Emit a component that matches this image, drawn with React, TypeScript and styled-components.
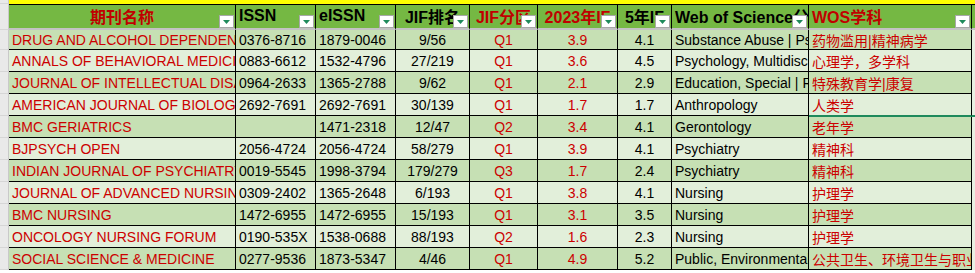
import styled, { createGlobalStyle } from "styled-components"

const GlobalStyle = createGlobalStyle`
  body {
    margin: 0;
    background: #fff;
    font-family: "Liberation Sans", "Noto Sans CJK SC", sans-serif;
  }
`

type Align = "left" | "center"

interface Column {
  title: string
  align: Align
  red?: boolean
  dataAlign: Align
  dataRed?: boolean
}

const columns: Column[] = [
  { title: "期刊名称", align: "center", red: true, dataAlign: "left", dataRed: true },
  { title: "ISSN", align: "left", dataAlign: "left" },
  { title: "eISSN", align: "left", dataAlign: "left" },
  { title: "JIF排名", align: "center", dataAlign: "center" },
  { title: "JIF分区", align: "center", red: true, dataAlign: "center", dataRed: true },
  { title: "2023年IF", align: "center", red: true, dataAlign: "center", dataRed: true },
  { title: "5年IF", align: "center", dataAlign: "center" },
  { title: "Web of Science分类", align: "left", dataAlign: "left" },
  { title: "WOS学科", align: "left", red: true, dataAlign: "left", dataRed: true },
]

const rows: string[][] = [
  ["DRUG AND ALCOHOL DEPENDENCE", "0376-8716", "1879-0046", "9/56", "Q1", "3.9", "4.1", "Substance Abuse | Psychiatry", "药物滥用|精神病学"],
  ["ANNALS OF BEHAVIORAL MEDICINE", "0883-6612", "1532-4796", "27/219", "Q1", "3.6", "4.5", "Psychology, Multidisciplinary", "心理学，多学科"],
  ["JOURNAL OF INTELLECTUAL DISABILITY RESEARCH", "0964-2633", "1365-2788", "9/62", "Q1", "2.1", "2.9", "Education, Special | Rehabilitation", "特殊教育学|康复"],
  ["AMERICAN JOURNAL OF BIOLOGICAL ANTHROPOLOGY", "2692-7691", "2692-7691", "30/139", "Q1", "1.7", "1.7", "Anthropology", "人类学"],
  ["BMC GERIATRICS", "", "1471-2318", "12/47", "Q2", "3.4", "4.1", "Gerontology", "老年学"],
  ["BJPSYCH OPEN", "2056-4724", "2056-4724", "58/279", "Q1", "3.9", "4.1", "Psychiatry", "精神科"],
  ["INDIAN JOURNAL OF PSYCHIATRY", "0019-5545", "1998-3794", "179/279", "Q3", "1.7", "2.4", "Psychiatry", "精神科"],
  ["JOURNAL OF ADVANCED NURSING", "0309-2402", "1365-2648", "6/193", "Q1", "3.8", "4.1", "Nursing", "护理学"],
  ["BMC NURSING", "1472-6955", "1472-6955", "15/193", "Q1", "3.1", "3.5", "Nursing", "护理学"],
  ["ONCOLOGY NURSING FORUM", "0190-535X", "1538-0688", "88/193", "Q2", "1.6", "2.3", "Nursing", "护理学"],
  ["SOCIAL SCIENCE & MEDICINE", "0277-9536", "1873-5347", "4/46", "Q1", "4.9", "5.2", "Public, Environmental & Occupational Health", "公共卫生、环境卫生与职业卫生"],
]

// row 4, last column is the active cell
const activeRow = 3

const App = () => {
  return (
    <>
      <GlobalStyle />
      <Sheet>
        <Row $height={4}>
          <Gutter />
          <YellowBar />
        </Row>
        <HeaderRow>
          <Gutter />
          {columns.map((c) => (
            <HeadCell key={c.title} $align={c.align} $red={c.red}>
              <span>{c.title}</span>
              <FilterButton>
                <svg width="7" height="4" viewBox="0 0 7 4">
                  <polygon points="0,0 7,0 3.5,4" fill="#1f8a5c" />
                </svg>
              </FilterButton>
            </HeadCell>
          ))}
          <HeadTail />
        </HeaderRow>
        {rows.map((r, i) => (
          <Row key={i} $height={i === 0 ? 20 : 22}>
            <Gutter />
            {r.map((v, j) => (
              <Cell
                key={j}
                $align={columns[j].dataAlign}
                $red={columns[j].dataRed}
                $dark={i % 2 === 0}
                $active={i === activeRow && j === r.length - 1}
              >
                {v}
              </Cell>
            ))}
            <Tail $active={i === activeRow} />
          </Row>
        ))}
      </Sheet>
    </>
  )
}

const gridCols = "9px 227px 80px 80px 74px 68px 80px 54px 137px 163px 1fr"

const Sheet = styled.div`
  width: 975px;
  display: flex;
  flex-direction: column;
`

const Row = styled.div<{ $height: number }>`
  display: grid;
  grid-template-columns: ${gridCols};
  height: ${(p) => p.$height}px;
`

const Gutter = styled.div`
  background: #e9e9e9;
  border-right: 1px solid #c9c9c9;
  border-bottom: 1px solid #d6d6d6;
  box-sizing: border-box;
`

const YellowBar = styled.div`
  grid-column: 2 / -1;
  background: #ffff00;
`

const HeaderRow = styled.div`
  display: grid;
  grid-template-columns: ${gridCols};
  height: 26px;
`

const HeadCell = styled.div<{ $align: Align; $red?: boolean }>`
  position: relative;
  box-sizing: border-box;
  background: #75b843;
  border-top: 1px solid #000;
  border-right: 1px solid #000;
  border-bottom: 2px solid #c3c3c3;
  overflow: hidden;
  display: flex;
  align-items: center;
  justify-content: ${(p) => (p.$align === "center" ? "center" : "flex-start")};
  padding: 0 3px 2px;
  font-size: 16px;
  font-weight: bold;
  color: ${(p) => (p.$red ? "#c00000" : "#000")};
  white-space: nowrap;
`

const HeadTail = styled.div`
  background: #75b843;
  border-top: 1px solid #000;
  border-bottom: 2px solid #c3c3c3;
  box-sizing: border-box;
`

const FilterButton = styled.span`
  position: absolute;
  right: 1px;
  bottom: 0;
  width: 15px;
  height: 13px;
  box-sizing: border-box;
  background: #fff;
  border: 1px solid #a8a8a8;
  display: flex;
  align-items: center;
  justify-content: center;
`

const Cell = styled.div<{ $align: Align; $red?: boolean; $dark: boolean; $active: boolean }>`
  position: relative;
  box-sizing: border-box;
  background: ${(p) => (p.$dark ? "#c6e0b4" : "#e2efda")};
  border-right: 1px solid #000;
  border-bottom: 1px solid ${(p) => (p.$active ? "#1f8a5c" : "#000")};
  ${(p) => p.$active && "box-shadow: 0 1px 0 #1f8a5c; z-index: 1;"}
  overflow: hidden;
  white-space: nowrap;
  display: flex;
  align-items: center;
  justify-content: ${(p) => (p.$align === "center" ? "center" : "flex-start")};
  padding: 0 3px;
  font-size: 14px;
  color: ${(p) => (p.$red ? "#cc0000" : "#000")};
`

const Tail = styled.div<{ $active: boolean }>`
  position: relative;
  background: #e8f0e2;
  ${(p) => p.$active && "box-shadow: 0 1px 0 #1f8a5c; border-bottom: 1px solid #1f8a5c; z-index: 1;"}
  box-sizing: border-box;
`

export default App
